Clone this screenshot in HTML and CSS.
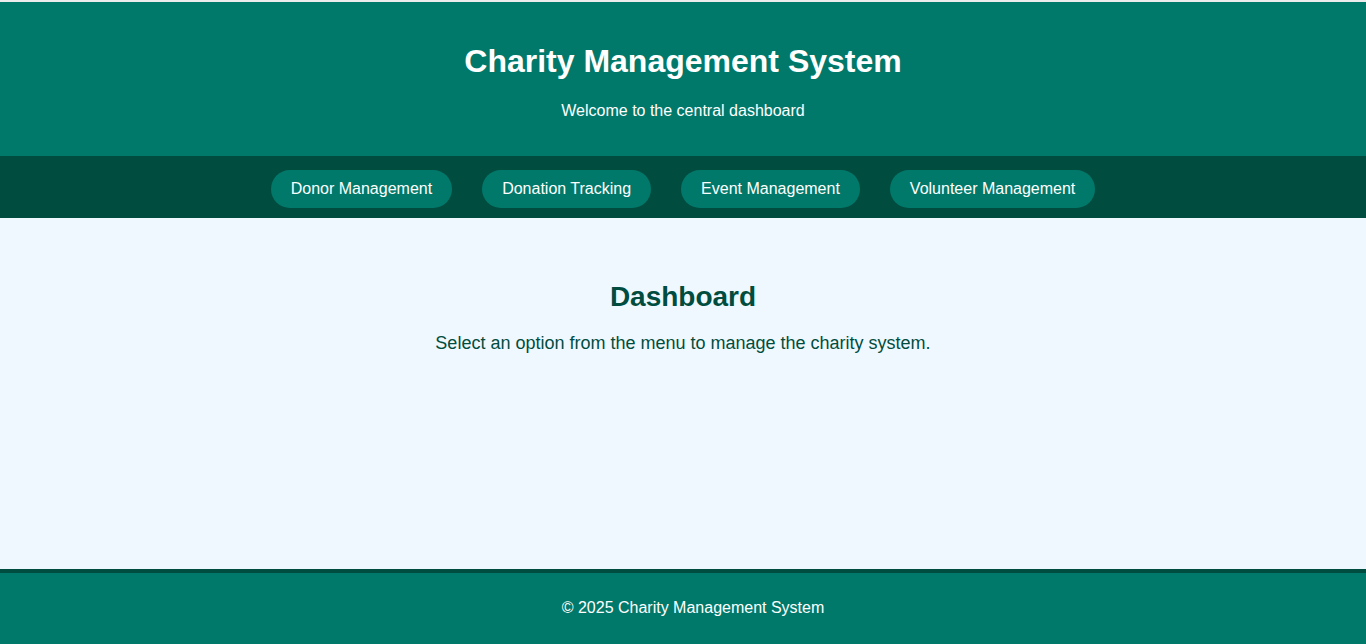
FILE: index.html
```html
<!DOCTYPE html>
<html lang="en">
<head>
<meta charset="UTF-8">
<title>Charity Management System</title>
<link rel="stylesheet" href="styles.css">
</head>
<body>
  <header class="site-header">
    <h1 class="site-title">Charity Management System</h1>
    <p class="site-subtitle">Welcome to the central dashboard</p>
  </header>
  <nav class="main-nav">
    <a class="nav-link" href="#">Donor Management</a>
    <a class="nav-link" href="#">Donation Tracking</a>
    <a class="nav-link" href="#">Event Management</a>
    <a class="nav-link" href="#">Volunteer Management</a>
  </nav>
  <main class="content">
    <h2 class="content-title">Dashboard</h2>
    <p class="content-text">Select an option from the menu to manage the charity system.</p>
  </main>
  <footer class="site-footer">
    <p class="footer-text">&copy; 2025 Charity Management System</p>
  </footer>
</body>
</html>
```

FILE: styles.css
```css
* { box-sizing: border-box; }
html, body { margin: 0; padding: 0; }
body {
  font-family: "Liberation Sans", Arial, sans-serif;
  background: #f0f8ff;
  color: #004d40;
  min-height: 100vh;
  display: flex;
  flex-direction: column;
  border-top: 2px solid #ececec;
}
.site-header {
  background: #00796b;
  color: #ffffff;
  text-align: center;
  padding: 20px;
}
.site-title {
  font-size: 32px;
  font-weight: bold;
  margin: 21.44px 0;
  line-height: 36.8px;
}
.site-subtitle {
  font-size: 16px;
  margin: 16px 0;
  line-height: 18.4px;
}
.main-nav {
  background: #004d40;
  display: flex;
  justify-content: center;
  gap: 30px;
  padding: 14px 0 10px;
}
.nav-link {
  display: block;
  background: #00796b;
  color: #ffffff;
  text-decoration: none;
  font-size: 16px;
  line-height: 18.4px;
  padding: 10px 20px;
  border-radius: 20px;
}
.content {
  flex: 1;
  text-align: center;
  padding: 40px 20px;
}
.content-title {
  font-size: 28px;
  line-height: 32px;
  margin: 23px 0 20px;
  color: #004d40;
}
.content-text {
  font-size: 18px;
  line-height: 20.7px;
  margin: 0;
  color: #004d40;
}
.site-footer {
  background: #00796b;
  color: #ffffff;
  text-align: center;
  border-top: 4px solid #004d40;
  padding: 26px 0 27px 20px;
}
.footer-text {
  margin: 0;
  font-size: 16px;
  line-height: 18.4px;
}
```
